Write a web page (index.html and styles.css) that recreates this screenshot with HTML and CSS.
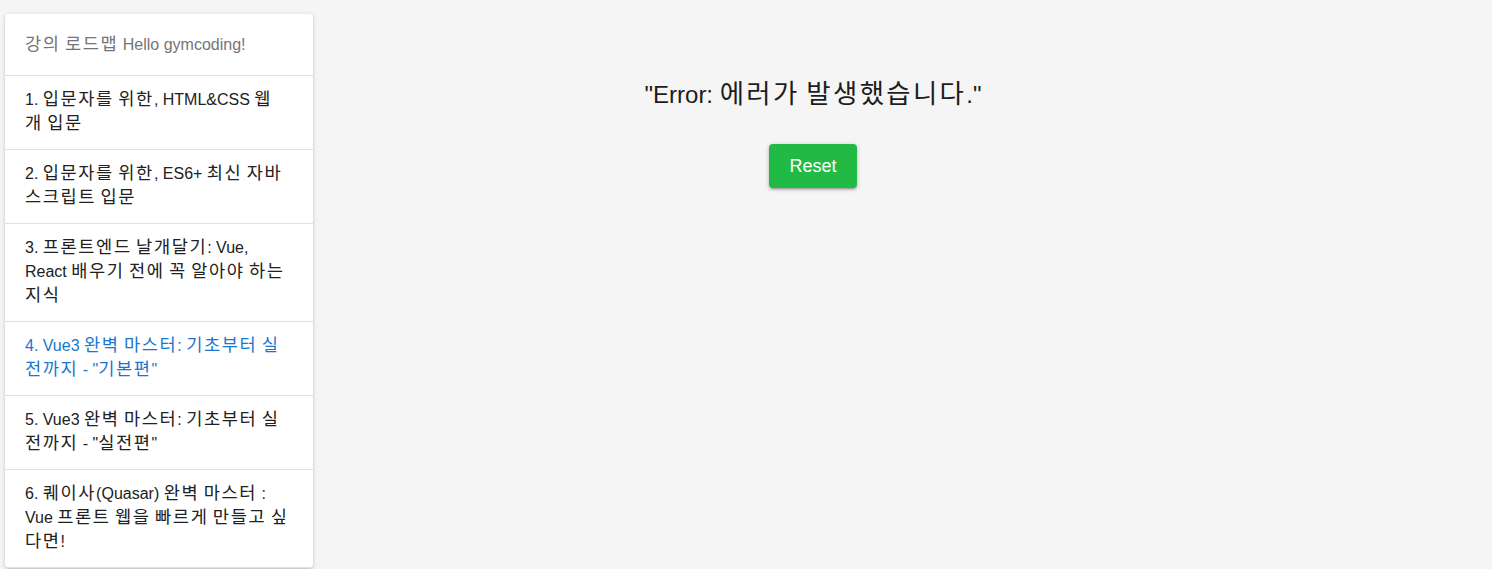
FILE: index.html
```html
<!DOCTYPE html>
<html lang="ko">
<head>
<meta charset="utf-8">
<title>강의 로드맵</title>
<link rel="stylesheet" href="styles.css">
</head>
<body>
<div class="page">
  <aside class="card">
    <div class="card-header"><span class="k">강의</span> <span class="k">로드맵</span> Hello gymcoding!</div>
    <ul class="list">
      <li class="item">1. <span class="k">입문자를</span> <span class="k">위한</span>, HTML&amp;CSS <span class="k">웹개</span> <span class="k">입문</span></li>
      <li class="item">2. <span class="k">입문자를</span> <span class="k">위한</span>, ES6+ <span class="k">최신</span> <span class="k">자바스크립트</span> <span class="k">입문</span></li>
      <li class="item">3. <span class="k">프론트엔드</span> <span class="k">날개달기</span>: Vue, React <span class="k">배우기</span> <span class="k">전에</span> <span class="k">꼭</span> <span class="k">알아야</span> <span class="k">하는</span> <span class="k">지식</span></li>
      <li class="item active">4. Vue3 <span class="k">완벽</span> <span class="k">마스터</span>: <span class="k">기초부터</span> <span class="k">실전까지</span> - "<span class="k">기본편</span>"</li>
      <li class="item">5. Vue3 <span class="k">완벽</span> <span class="k">마스터</span>: <span class="k">기초부터</span> <span class="k">실전까지</span> - "<span class="k">실전편</span>"</li>
      <li class="item">6. <span class="k">퀘이사</span>(Quasar) <span class="k">완벽</span> <span class="k">마스터</span> : Vue <span class="k">프론트</span> <span class="k">웹을</span> <span class="k">빠르게</span> <span class="k">만들고</span> <span class="k">싶다면</span>!</li>
    </ul>
  </aside>
  <main class="main">
    <p class="error">"Error: <span class="k">에러가</span> <span class="k">발생했습니다</span>."</p>
    <button class="btn" type="button">Reset</button>
  </main>
</div>
</body>
</html>
```

FILE: styles.css
```css
html, body {
  margin: 0;
  padding: 0;
  background: #f5f5f5;
  font-family: "Liberation Sans", "Noto Sans CJK KR", sans-serif;
  color: #212121;
  height: 100%;
  overflow: hidden;
}

.k {
  font-family: "Noto Sans CJK KR", "Liberation Sans", sans-serif;
  font-size: 1.1em;
  letter-spacing: 0.09em;
  line-height: 1;
}

.page {
  display: flex;
  align-items: flex-start;
  padding: 14px 0 0 5px;
}

.card {
  width: 308px;
  flex: none;
  background: #fff;
  border-radius: 4px;
  box-shadow: 0 1px 4px rgba(0,0,0,0.16), 0 1px 2px rgba(0,0,0,0.1);
}

.card-header {
  padding: 19px 20px 18px;
  font-size: 16px;
  line-height: 24px;
  color: #757575;
  border-bottom: 1px solid #e0e0e0;
}

.list {
  list-style: none;
  margin: 0;
  padding: 0;
}

.item {
  padding: 12px 24px 13px 20px;
  font-size: 16px;
  line-height: 24px;
  border-bottom: 1px solid #e0e0e0;
}

.item.active {
  color: #1976d2;
}

.main {
  width: 1000px;
  flex: none;
  text-align: center;
}

.error {
  margin: 63px 0 0;
  font-size: 24px;
  line-height: 36px;
  color: #1d1d1d;
}

.btn {
  margin-top: 31px;
  height: 44px;
  padding: 0 20px;
  border: 0;
  border-radius: 4px;
  background: #21ba45;
  color: #fff;
  font-family: "Liberation Sans", sans-serif;
  font-size: 18px;
  box-shadow: 0 1px 5px rgba(0,0,0,0.2), 0 2px 2px rgba(0,0,0,0.14), 0 3px 1px -2px rgba(0,0,0,0.12);
  cursor: pointer;
}
```
